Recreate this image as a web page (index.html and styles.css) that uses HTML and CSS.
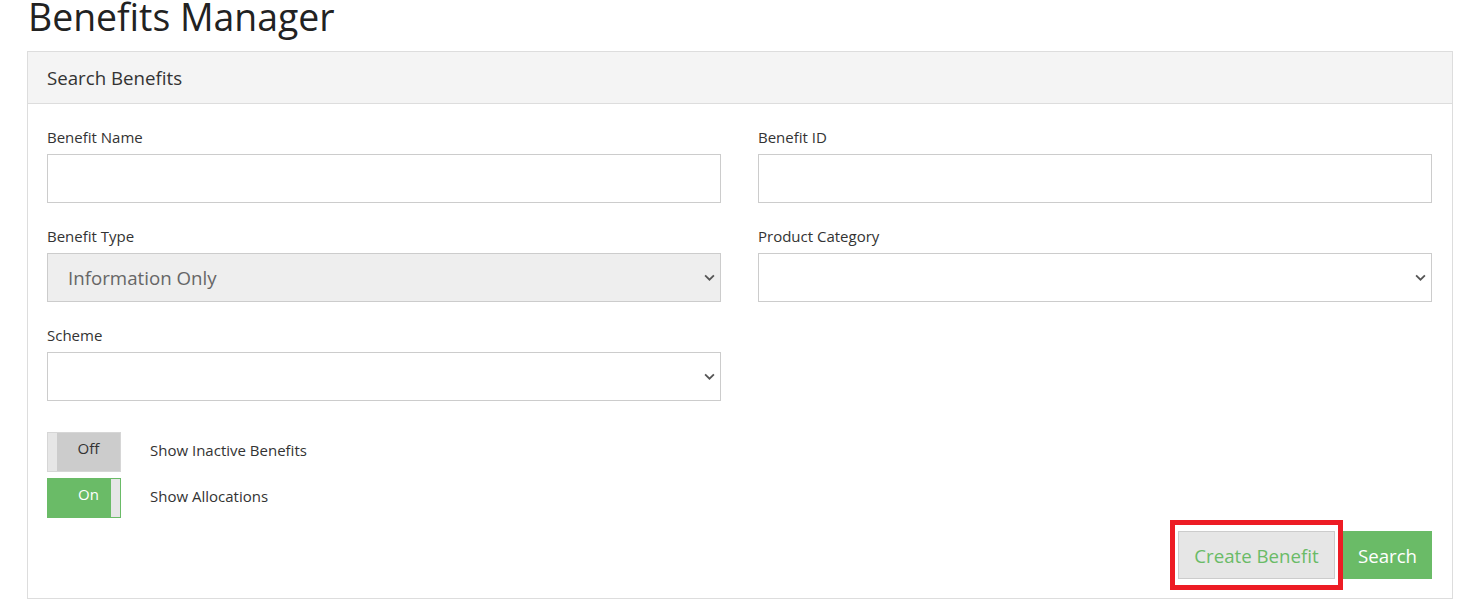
FILE: index.html
```html
<!DOCTYPE html>
<html lang="en">
<head>
  <meta charset="UTF-8">
  <title>Benefits Manager</title>
  <link rel="stylesheet" href="styles.css">
</head>
<body>

  <h1 class="page-title">Benefits Manager</h1>

  <div class="panel">
    <div class="panel-heading">Search Benefits</div>
    <div class="panel-body">

      <div class="form-grid">
        <div class="field">
          <label>Benefit Name</label>
          <input class="control" type="text">
        </div>
        <div class="field">
          <label>Benefit ID</label>
          <input class="control" type="text">
        </div>
        <div class="field">
          <label>Benefit Type</label>
          <div class="control select disabled">
            <span>Information Only</span>
            <svg class="chevron" viewBox="0 0 10 6"><path d="M1 1l4 4 4-4" /></svg>
          </div>
        </div>
        <div class="field">
          <label>Product Category</label>
          <div class="control select">
            <span></span>
            <svg class="chevron" viewBox="0 0 10 6"><path d="M1 1l4 4 4-4" /></svg>
          </div>
        </div>
        <div class="field">
          <label>Scheme</label>
          <div class="control select">
            <span></span>
            <svg class="chevron" viewBox="0 0 10 6"><path d="M1 1l4 4 4-4" /></svg>
          </div>
        </div>
      </div>

      <div class="toggles">
        <div class="toggle-row">
          <div class="toggle off"><span class="handle"></span><span class="label">Off</span></div>
          <span class="toggle-text">Show Inactive Benefits</span>
        </div>
        <div class="toggle-row">
          <div class="toggle on"><span class="label">On</span><span class="handle"></span></div>
          <span class="toggle-text">Show Allocations</span>
        </div>
      </div>

      <div class="actions">
        <div class="highlight">
          <button class="btn btn-default" type="button">Create Benefit</button>
        </div>
        <button class="btn btn-primary" type="button">Search</button>
      </div>

    </div>
  </div>

</body>
</html>
```

FILE: styles.css
```css
* {
  box-sizing: border-box;
}

body {
  margin: 0;
  padding: 0 16px 0 27px;
  font-family: 'Open Sans', sans-serif;
  color: #333;
  background: #fff;
}

.page-title {
  margin: 0 0 0 1px;
  height: 51px;
  font-size: 37.4px;
  font-weight: 400;
  line-height: 34px;
  color: #222;
}

.panel {
  border: 1px solid #ddd;
  background: #fff;
  width: 1426px;
}

.panel-heading {
  background: #f4f4f4;
  border-bottom: 1px solid #ddd;
  height: 52px;
  padding: 0 19px;
  font-size: 18.7px;
  line-height: 51px;
  color: #333;
}

.panel-body {
  padding: 23px 20px 8px 19px;
}

.form-grid {
  display: grid;
  grid-template-columns: 674px 674px;
  column-gap: 37px;
  row-gap: 23px;
}

.field label {
  display: block;
  font-size: 15px;
  line-height: 21px;
  margin-bottom: 6px;
  color: #333;
}

.control {
  display: block;
  width: 100%;
  height: 49px;
  border: 1px solid #ccc;
  background: #fff;
  font-family: inherit;
  font-size: 18.7px;
  outline: none;
}

.select {
  display: flex;
  align-items: center;
  justify-content: space-between;
  padding: 0 5px 0 20px;
  color: #666;
}

.select.disabled {
  background: #eee;
}

.chevron {
  width: 11px;
  height: 7px;
  fill: none;
  stroke: #555;
  stroke-width: 1.6;
}

.toggles {
  margin-top: 31px;
  display: flex;
  flex-direction: column;
  gap: 6px;
}

.toggle-row {
  display: flex;
  align-items: center;
  gap: 29px;
}

.toggle {
  display: flex;
  width: 74px;
  height: 40px;
  font-size: 15px;
}

.toggle .label {
  flex: 1;
  padding-bottom: 9px;
  display: flex;
  align-items: center;
  justify-content: center;
}

.toggle .handle {
  width: 9px;
  background: #e6e6e6;
}

.toggle.off {
  background: #ccc;
  border: 1px solid #d6d6d6;
  color: #333;
}

.toggle.on {
  background: #6abb67;
  border: 1px solid #6abb67;
  color: #fff;
}

.toggle.on .label {
  padding-left: 18px;
}

.toggle-text {
  font-size: 15px;
  color: #333;
  padding-bottom: 4px;
}

.actions {
  display: flex;
  justify-content: flex-end;
  align-items: center;
  margin-top: 2px;
}

.highlight {
  border: 5px solid #ed1c24;
  padding: 6px 3px;
}

.btn {
  height: 48px;
  font-family: inherit;
  font-size: 18.7px;
  cursor: pointer;
}

.btn-default {
  width: 157px;
  padding: 0;
  background: #e6e6e6;
  border: 1px solid #ccc;
  color: #6abb67;
}

.btn-primary {
  width: 89px;
  padding: 0;
  background: #6abb67;
  border: 1px solid #6abb67;
  color: #fff;
}
```
